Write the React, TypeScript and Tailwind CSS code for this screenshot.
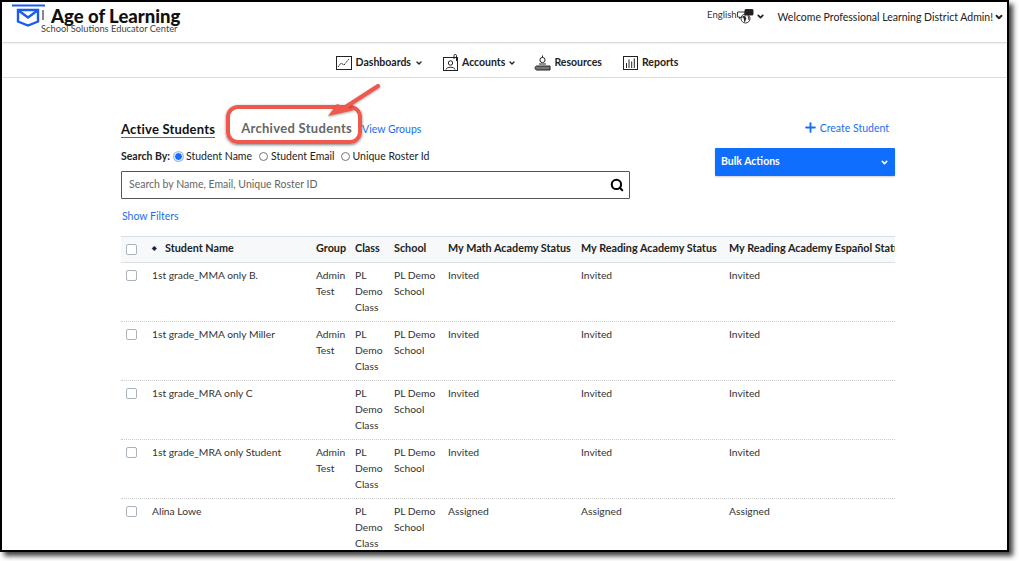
import { ChevronDown, Plus, Search } from 'lucide-react';

const rows = [
  { name: '1st grade_MMA only B.', group: true, status: 'Invited' },
  { name: '1st grade_MMA only Miller', group: true, status: 'Invited' },
  { name: '1st grade_MRA only C', group: false, status: 'Invited' },
  { name: '1st grade_MRA only Student', group: true, status: 'Invited' },
  { name: 'Alina Lowe', group: false, status: 'Assigned' },
];

function Logo() {
  return (
    <svg width="35" height="24" viewBox="0 0 35 24" fill="none" className="shrink-0">
      <path d="M0 1.5H33" stroke="#1a5cf0" strokeWidth="2" />
      <path d="M6 6H26V17.5L16 21.5L6 17.5Z" stroke="#1a5cf0" strokeWidth="2.4" />
      <path d="M6.5 6.5L16 13.5L25.5 6.5" stroke="#1a5cf0" strokeWidth="2.4" />
      <path d="M31 6V16" stroke="#555" strokeWidth="1.4" />
    </svg>
  );
}

function DashIcon() {
  return (
    <svg width="16" height="14" viewBox="0 0 16 14" fill="none" stroke="#222" strokeWidth="1">
      <rect x="0.5" y="0.5" width="15" height="13" />
      <path d="M2 11L5 7L8 9L13 3" strokeDasharray="1.5 0.6" />
    </svg>
  );
}

function AccountIcon() {
  return (
    <svg width="16" height="17" viewBox="0 0 16 17" fill="none" stroke="#222" strokeWidth="1">
      <rect x="0.5" y="3.5" width="14" height="13" />
      <circle cx="7.5" cy="9" r="2.2" />
      <path d="M3 15.5C3.5 12.5 11.5 12.5 12 15.5" />
      <path d="M11 5V1.5C11 0 13.5 0 13.5 1.5V7" />
    </svg>
  );
}

function ResourceIcon() {
  return (
    <svg width="17" height="16" viewBox="0 0 17 16" fill="none" stroke="#222" strokeWidth="1">
      <circle cx="8.5" cy="5" r="2.6" />
      <path d="M8.5 2.5V0.5M5 9H12" />
      <path d="M3 11H16V15H3C0.5 15 0.5 11 3 11Z" fill="#777" />
    </svg>
  );
}

function ReportIcon() {
  return (
    <svg width="15" height="14" viewBox="0 0 15 14" fill="none" stroke="#222" strokeWidth="1">
      <rect x="0.5" y="0.5" width="14" height="13" />
      <path d="M3.5 12V7M6 12V3.5M8.7 12V5.5M11.3 12V2.5" />
    </svg>
  );
}

function GlobeIcon() {
  return (
    <svg width="17" height="15" viewBox="0 0 17 15" fill="none" stroke="#222" strokeWidth="0.9">
      <path d="M0.5 3H8V8H4L2.5 9.5V8H0.5Z" />
      <rect x="8" y="0.5" width="8" height="5.5" rx="0.5" fill="#222" />
      <circle cx="8.5" cy="9.5" r="4.5" />
      <path d="M6 7L9 9L7.5 13M11 6.5L12 11" fill="#222" />
    </svg>
  );
}

function Radio({ checked }: { checked?: boolean }) {
  return (
    <span
      className={
        checked
          ? 'inline-block size-[9px] rounded-full bg-[#1a6ef5] ring-1 ring-[#9cc0f5] border border-white'
          : 'inline-block size-[9px] rounded-full bg-white border border-[#777]'
      }
    />
  );
}

function Check() {
  return <span className="block size-[11px] rounded-[2px] border border-[#a9b3bd] bg-white" />;
}

const cols = 'grid grid-cols-[26px_164px_39px_39px_54px_133px_148px_180px] w-[774px] pl-[5px]';

export default function App() {
  return (
    <div className="w-[1019px] h-[561px] bg-white overflow-hidden">
      <div className="relative w-[1009px] h-[552px] border-2 border-black bg-white overflow-hidden text-[#222] shadow-[4px_4px_5px_rgba(0,0,0,0.75)] [font-family:'Lato',sans-serif]">
        <header className="h-[41px] flex items-start justify-between border-b border-[#dcdcdc] shadow-[0_1px_1px_rgba(0,0,0,0.05)]">
          <div className="pl-[10px] pt-[2px] flex flex-col">
            <div className="flex items-start gap-[4px]">
              <Logo />
              <span className="mt-[4px] text-[18.5px] leading-[16px] font-black text-[#111]">Age of Learning</span>
            </div>
            <span className="pl-[29px] -mt-[4px] text-[9.3px] leading-[10px] text-[#444]">School Solutions Educator Center</span>
          </div>
          <div className="flex items-center pt-[8px] pr-[3px]">
            <span className="text-[9.5px] leading-[12px] text-[#333] -mt-[5px]">English</span>
            <span className="-mt-[1px]"><GlobeIcon /></span>
            <ChevronDown size={9} strokeWidth={4.5} className="ml-[2px] -mt-[1px]" />
            <span className="ml-[13px] text-[10.5px] leading-[14px] text-[#222]">Welcome Professional Learning District Admin!</span>
            <ChevronDown size={10} strokeWidth={4.5} className="ml-[1px]" />
          </div>
        </header>

        <nav className="h-[35px] flex items-center justify-center border-b border-[#dcdcdc] text-[10.5px] font-bold pl-[5px] pt-[5px] text-[#222]">
          <span className="flex items-center gap-[4px]"><DashIcon />Dashboards<ChevronDown size={8} strokeWidth={4} /></span>
          <span className="ml-[20px] flex items-center gap-[3px]"><AccountIcon />Accounts<ChevronDown size={8} strokeWidth={4} /></span>
          <span className="ml-[18px] flex items-center gap-[3px]"><ResourceIcon />Resources</span>
          <span className="ml-[21px] flex items-center gap-[4px]"><ReportIcon />Reports</span>
        </nav>

        <main className="pl-[119px] w-[893px]">
          <div className="flex justify-between items-start">
            <div className="w-[509px]">
              <div className="flex items-start pt-[43px] h-[60px]">
                <span className="text-[13px] leading-[16px] font-bold border-b border-[#1a6ef5] text-[#111] tracking-[0.2px]">Active Students</span>
                <span className="ml-[26px] -mt-[1px] text-[13px] leading-[16px] font-bold text-[#666] tracking-[0.3px]">Archived Students</span>
                <span className="ml-[10px] mt-[1px] text-[10.5px] leading-[14px] text-[#1a6ef5]">View Groups</span>
              </div>
              <div className="mt-[11px] flex items-center text-[10.5px] leading-[14px] text-[#222]">
                <span className="font-bold">Search By:</span>
                <span className="ml-[4px] flex items-center gap-[3px]"><Radio checked />Student Name</span>
                <span className="ml-[7px] flex items-center gap-[3px]"><Radio />Student Email</span>
                <span className="ml-[6px] flex items-center gap-[3px]"><Radio />Unique Roster Id</span>
              </div>
              <div className="mt-[8px] h-[28px] flex items-center justify-between pl-[7px] pr-[5px] border border-[#555] rounded-[1px] text-[10.5px] text-[#666]">
                Search by Name, Email, Unique Roster ID
                <Search size={14} strokeWidth={3.5} className="text-black" />
              </div>
              <div className="mt-[10px] pl-[1px] text-[10.5px] leading-[14px] text-[#1a6ef5]">Show Filters</div>
            </div>
            <div className="w-[180px] pt-[42px]">
              <div className="flex items-center justify-end gap-[2px] pr-[6px] text-[10.5px] leading-[14px] text-[#1a6ef5]">
                <Plus size={15} strokeWidth={3} />
                Create Student
              </div>
              <div className="mt-[13px] h-[28px] flex items-center justify-between px-[6px] rounded-[1px] bg-[#0f6efd] text-white text-[10.5px] font-bold shadow-[0_1px_2px_rgba(0,0,0,0.2)]">
                Bulk Actions
                <ChevronDown size={9} strokeWidth={4} />
              </div>
            </div>
          </div>

          <div className="mt-[13px] w-[774px] overflow-hidden text-[10.3px] leading-[16px]">
            <div className={`${cols} h-[27px] items-center pb-[3px] bg-[#f6f8f9] border-y border-[#d9e0e3] text-[10.8px] font-bold text-[#222] whitespace-nowrap`}>
              <span className="pt-[3px]"><Check /></span>
              <span className="flex items-center gap-[8px]"><span className="text-[6px]">◆</span>Student Name</span>
              <span>Group</span>
              <span>Class</span>
              <span>School</span>
              <span>My Math Academy Status</span>
              <span>My Reading Academy Status</span>
              <span>My Reading Academy Español Status</span>
            </div>
            {rows.map((r) => (
              <div key={r.name} className={`${cols} h-[59px] pt-[4px] border-b border-dotted border-[#c9c9c9] text-[#333]`}>
                <span className="pt-[3px]"><Check /></span>
                <span>{r.name}</span>
                <span>{r.group ? <>Admin<br />Test</> : null}</span>
                <span>PL<br />Demo<br />Class</span>
                <span>PL Demo<br />School</span>
                <span>{r.status}</span>
                <span>{r.status}</span>
                <span>{r.status}</span>
              </div>
            ))}
          </div>
        </main>

        {/* callout drawn on top of the screenshot */}
        <div className="absolute left-[224px] top-[103px] w-[136px] h-[39px] rounded-[12px] border-[4px] border-[#f0584e] shadow-[0_1px_3px_rgba(0,0,0,0.5)]" />
        <svg className="absolute left-[320px] top-[78px] drop-shadow-[0_1px_1px_rgba(0,0,0,0.35)]" width="65" height="45" viewBox="0 0 65 45" fill="none">
          <path d="M56 6L22 28" stroke="#f0584e" strokeWidth="4" strokeLinecap="round" />
          <path d="M15 24L6 36L33 30Z" fill="#f0584e" />
        </svg>
      </div>
    </div>
  );
}
